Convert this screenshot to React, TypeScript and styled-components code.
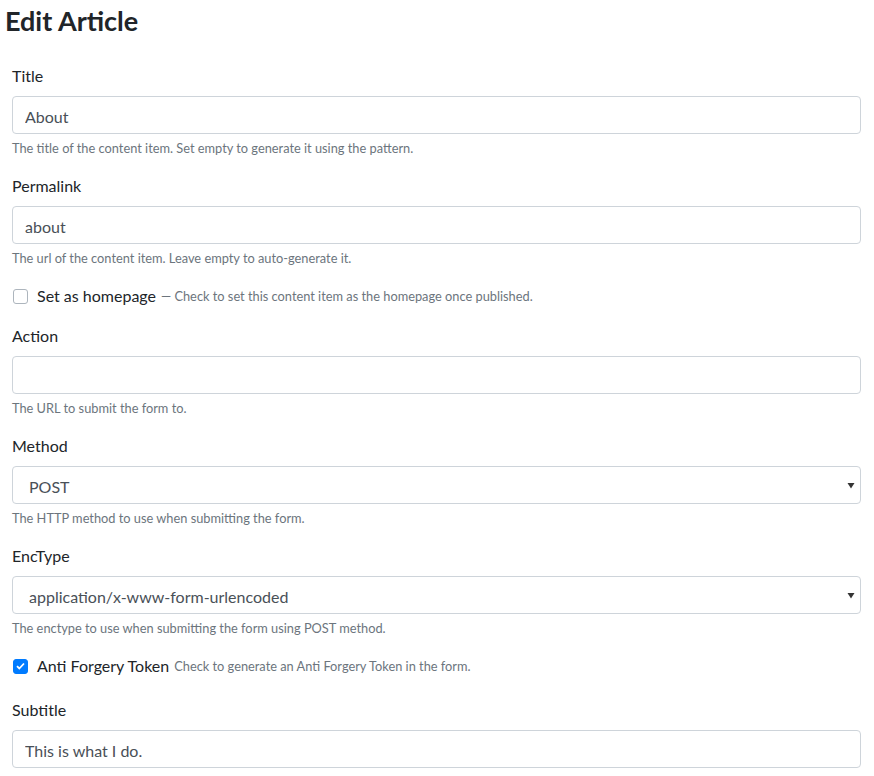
import { createGlobalStyle, styled } from "styled-components";

const GlobalStyle = createGlobalStyle`
  * {
    box-sizing: border-box;
  }
  body {
    margin: 0;
    background: #fff;
    font-family: Lato, "Open Sans", sans-serif;
    color: #212529;
  }
`;

const Page = styled.div`
  display: flex;
  flex-direction: column;
  padding: 4px 13px 0 12px;
`;

const Heading = styled.h1`
  margin: 0 0 26px -7px;
  font-size: 27px;
  line-height: 34px;
  font-weight: 700;
  color: #212529;
`;

const Group = styled.div`
  display: flex;
  flex-direction: column;
  margin-bottom: 16px;
`;

const Label = styled.label`
  display: block;
  margin-bottom: 8px;
  font-size: 16px;
  line-height: 24px;
  color: #212529;
`;

const TextInput = styled.input`
  width: 100%;
  height: 38px;
  padding: 7px 12px 5px;
  border: 1px solid #ced4da;
  border-radius: 4px;
  font-family: inherit;
  font-size: 16px;
  color: #495057;
  background: #fff;
  outline: none;
`;

const SelectWrap = styled.div`
  position: relative;
`;

const Select = styled.select`
  width: 100%;
  height: 38px;
  padding: 7px 28px 5px 16px;
  border: 1px solid #ced4da;
  border-radius: 4px;
  font-family: inherit;
  font-size: 16px;
  color: #495057;
  background: #fff;
  appearance: none;
  outline: none;
`;

const Caret = styled.svg`
  position: absolute;
  right: 6px;
  top: 16px;
  pointer-events: none;
`;

const Help = styled.small`
  display: block;
  margin-top: 4px;
  font-size: 12.8px;
  line-height: 20px;
  color: #6c757d;
`;

const CheckRow = styled.div<{ $gap: number }>`
  display: flex;
  align-items: center;
  height: 24px;
  margin-bottom: ${(p) => p.$gap}px;
`;

const Box = styled.span<{ $checked: boolean }>`
  display: inline-flex;
  align-items: center;
  justify-content: center;
  width: 15px;
  height: 15px;
  margin: 0 9px 0 1px;
  border-radius: 3px;
  border: 1px solid ${(p) => (p.$checked ? "#007bff" : "#adb5bd")};
  background: ${(p) => (p.$checked ? "#007bff" : "#fff")};
`;

const CheckLabel = styled.span`
  font-size: 16px;
  line-height: 24px;
  color: #212529;
`;

const Hint = styled.span`
  margin-left: 5px;
  font-size: 12.8px;
  color: #6c757d;
`;

function Field({ label, value, help }: { label: string; value: string; help: string }) {
  return (
    <Group>
      <Label>{label}</Label>
      <TextInput defaultValue={value} />
      <Help>{help}</Help>
    </Group>
  );
}

function SelectField({ label, value, help }: { label: string; value: string; help: string }) {
  return (
    <Group>
      <Label>{label}</Label>
      <SelectWrap>
        <Select defaultValue={value}>
          <option value={value}>{value}</option>
        </Select>
        <Caret width="8" height="7" viewBox="0 0 8 7">
          <path d="M0.5 1h7L4 6.5z" fill="#333" />
        </Caret>
      </SelectWrap>
      <Help>{help}</Help>
    </Group>
  );
}

function Check({ checked, label, hint, gap }: { checked: boolean; label: string; hint: string; gap: number }) {
  return (
    <CheckRow $gap={gap}>
      <Box $checked={checked}>
        {checked && (
          <svg width="9" height="8" viewBox="0 0 9 8">
            <path d="M1 4.2l2.3 2.3L8 1.5" stroke="#fff" strokeWidth="1.8" fill="none" />
          </svg>
        )}
      </Box>
      <CheckLabel>{label}</CheckLabel>
      <Hint>{hint}</Hint>
    </CheckRow>
  );
}

export default function App() {
  return (
    <>
      <GlobalStyle />
      <Page>
        <Heading>Edit Article</Heading>
        <Field
          label="Title"
          value="About"
          help="The title of the content item. Set empty to generate it using the pattern."
        />
        <Field
          label="Permalink"
          value="about"
          help="The url of the content item. Leave empty to auto-generate it."
        />
        <Check
          checked={false}
          label="Set as homepage"
          hint="— Check to set this content item as the homepage once published."
          gap={16}
        />
        <Field label="Action" value="" help="The URL to submit the form to." />
        <SelectField label="Method" value="POST" help="The HTTP method to use when submitting the form." />
        <SelectField
          label="EncType"
          value="application/x-www-form-urlencoded"
          help="The enctype to use when submitting the form using POST method."
        />
        <Check
          checked={true}
          label="Anti Forgery Token"
          hint="Check to generate an Anti Forgery Token in the form."
          gap={20}
        />
        <Field label="Subtitle" value="This is what I do." help="" />
      </Page>
    </>
  );
}
